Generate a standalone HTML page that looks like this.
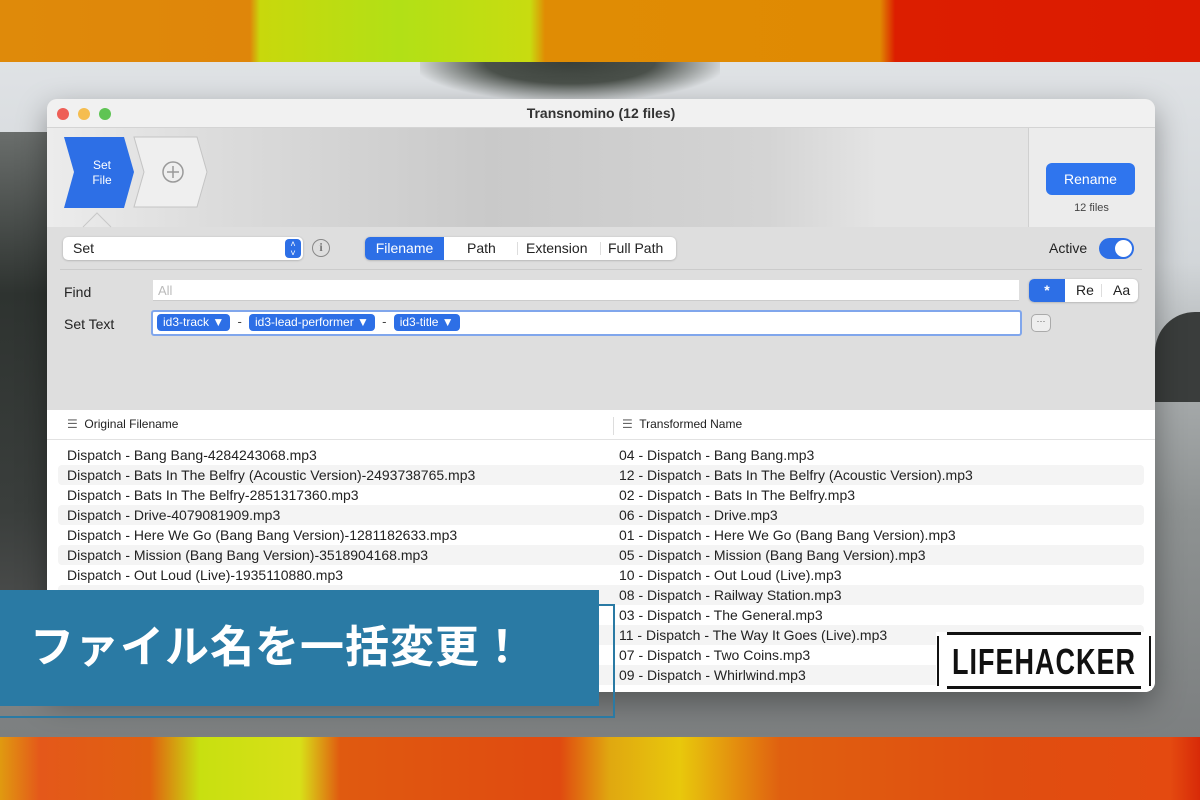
<!DOCTYPE html>
<html><head><meta charset="utf-8"><style>
*{margin:0;padding:0;box-sizing:border-box}
body{width:1200px;height:800px;overflow:hidden;position:relative;font-family:"Liberation Sans","Noto Sans CJK JP",sans-serif;background:#9a9ea1}
.abs{position:absolute}
#top{left:0;top:0;width:1200px;height:62px;background:linear-gradient(90deg,#df8a0a 0,#df860a 250px,#c8d80c 260px,#b2e016 400px,#c8dc10 530px,#e08c04 545px,#e08a02 880px,#dc1e00 895px,#dc1a00 1200px)}
#bot{left:0;top:737px;width:1200px;height:63px;background:linear-gradient(90deg,#e09a10 0,#e4581a 40px,#e06010 150px,#c8e010 200px,#d8e018 300px,#e05a10 340px,#e04a10 560px,#e0a810 610px,#e8c80c 680px,#e06010 780px,#e04e10 1000px,#e44a10 1170px,#d82a08 1200px)}
#photo{left:0;top:62px;width:1200px;height:675px;background:linear-gradient(180deg,#dfe2e5 0,#d2d6d9 200px,#a6aaab 330px,#8e9292 450px,#7c7f80 675px)}
.win{left:47px;top:99px;width:1108px;height:593px;background:#dedede;border-radius:10px;overflow:hidden;box-shadow:0 10px 30px rgba(0,0,0,.35)}
.title{left:0;top:0;width:1108px;height:29px;background:#f1f1f1;border-bottom:1px solid #d4d4d4;text-align:center;font-weight:bold;font-size:14px;line-height:29px;color:#333}
.dot{top:9px;width:12px;height:12px;border-radius:50%}
.tb{left:0;top:29px;width:1108px;height:99px;background:linear-gradient(90deg,#ececec 0,#dcdcdc 15%,#c9c9c9 40%,#d4d4d4 65%,#e4e4e4 75%)}
.rsec{left:981px;top:29px;width:127px;height:99px;background:#ececec;border-left:1px solid #d0d0d0}
.btn{background:#fff;border-radius:5px;box-shadow:0 0.5px 2px rgba(0,0,0,.25);font-size:14px;color:#222}
.lab{font-size:14px;color:#222}
.row{left:11px;width:1086px;height:20px;font-size:14px;color:#222;line-height:20px}
.row span{position:absolute;top:0}
.tok{display:inline-block;background:#2d6fe6;color:#fff;font-size:12px;border-radius:4px;padding:0 6px;height:17px;line-height:17px;margin-top:2px}
</style></head><body>
<div id="top" class="abs"></div>
<div id="photo" class="abs">
 <div class="abs" style="left:420px;top:0;width:300px;height:38px;background:radial-gradient(ellipse at 50% 0,#3a403a 0,#4a504a 40%,rgba(60,66,60,0) 75%)"></div>
 <div class="abs" style="left:0;top:70px;width:50px;height:540px;background:linear-gradient(180deg,#6a6e6c,#2e3330 30%,#3a3e3c 70%,#555 100%)"></div>
 <div class="abs" style="left:1155px;top:250px;width:45px;height:90px;background:#3a3d3c;border-radius:40px 0 0 0"></div>
</div>
<div id="bot" class="abs"></div>

<div class="win abs">
 <div class="title abs">Transnomino (12 files)</div>
 <div class="dot abs" style="left:10px;background:#ee5f57"></div>
 <div class="dot abs" style="left:31px;background:#f5bd4f"></div>
 <div class="dot abs" style="left:52px;background:#5fc454"></div>
 <div class="tb abs"></div>
 <svg class="abs" style="left:14px;top:37px" width="150" height="95">
  <polygon points="86,1 149,1 159,36 149,71 86,71 96,36" transform="translate(-13,0)" fill="#efefef" stroke="#c4c4c4"/>
  <circle cx="112" cy="36" r="10" fill="none" stroke="#9a9a9a" stroke-width="1.5"/>
  <path d="M112 30v12M106 36h12" stroke="#9a9a9a" stroke-width="1.5"/>
  <polygon points="3,1 63,1 73,36 63,72 3,72 13,36" fill="#2d6fe6"/>
  <polyline points="22,91 36,77 50,91" fill="none" stroke="#c8c8c8"/>
  <text x="41" y="33" fill="#fff" font-size="12" text-anchor="middle" font-family="Liberation Sans">Set</text>
  <text x="41" y="48" fill="#fff" font-size="12" text-anchor="middle" font-family="Liberation Sans">File</text>
 </svg>
 <div class="rsec abs"></div>
 <div class="abs" style="left:999px;top:64px;width:89px;height:32px;background:#2f75ee;border-radius:6px;color:#fff;font-size:14px;text-align:center;line-height:32px">Rename</div>
 <div class="abs" style="left:981px;top:103px;width:127px;text-align:center;font-size:11px;color:#444">12 files</div>

 <div class="btn abs" style="left:16px;top:138px;width:240px;height:23px;line-height:23px;padding-left:10px">Set</div>
 <div class="abs" style="left:238px;top:140px;width:16px;height:19px;background:#2d6fe6;border-radius:4px;color:#fff;font-size:9px;text-align:center;line-height:9px;padding-top:1px">˄<br>˅</div>
 <div class="abs" style="left:265px;top:140px;width:18px;height:18px;border:1.5px solid #888;border-radius:50%;text-align:center;font:bold 12px/15px 'Liberation Serif',serif;color:#777">i</div>
 <div class="btn abs" style="left:318px;top:138px;width:311px;height:23px;line-height:23px">
  <div class="abs" style="left:0;top:0;width:79px;height:23px;background:#2d6fe6;color:#fff;border-radius:5px 0 0 5px;text-align:center">Filename</div>
  <span class="abs" style="left:102px">Path</span>
  <span class="abs" style="left:152px;top:5px;height:13px;border-left:1px solid #ddd"></span>
  <span class="abs" style="left:161px">Extension</span>
  <span class="abs" style="left:235px;top:5px;height:13px;border-left:1px solid #ddd"></span>
  <span class="abs" style="left:243px">Full Path</span>
 </div>
 <div class="abs lab" style="left:1002px;top:141px">Active</div>
 <div class="abs" style="left:1052px;top:139px;width:35px;height:21px;background:#2d6fe6;border-radius:11px"><div class="abs" style="right:2px;top:2px;width:17px;height:17px;background:#fff;border-radius:50%"></div></div>
 <div class="abs" style="left:13px;top:170px;width:1082px;border-top:1px solid #cbcbcb"></div>

 <div class="abs lab" style="left:17px;top:185px">Find</div>
 <div class="abs" style="left:106px;top:181px;width:866px;height:21px;background:#fff;border-bottom:1px solid #ccc;font-size:13px;color:#bbb;line-height:21px;padding-left:5px">All</div>
 <div class="btn abs" style="left:982px;top:180px;width:109px;height:23px;line-height:23px">
  <div class="abs" style="left:0;top:0;width:36px;height:23px;background:#2d6fe6;color:#fff;border-radius:5px 0 0 5px;text-align:center;font-weight:bold">*</div>
  <span class="abs" style="left:47px">Re</span>
  <span class="abs" style="left:72px;top:5px;height:13px;border-left:1px solid #ddd"></span>
  <span class="abs" style="left:84px">Aa</span>
 </div>
 <div class="abs lab" style="left:17px;top:217px">Set Text</div>
 <div class="abs" style="left:104px;top:211px;width:871px;height:26px;background:#fff;border:2.5px solid #80a6ec;border-radius:3px;padding-left:4px;font-size:13px;color:#444;white-space:nowrap">
  <span class="tok">id3-track ▼</span> &nbsp;- &nbsp;<span class="tok">id3-lead-performer ▼</span> &nbsp;- &nbsp;<span class="tok">id3-title ▼</span>
 </div>
 <div class="abs" style="left:984px;top:215px;width:20px;height:18px;border:1.5px solid #aaa;border-radius:5px;background:#eee;font-size:9px;text-align:center;line-height:12px;color:#555">···</div>

 <div class="abs" style="left:0;top:311px;width:1108px;height:282px;background:#fff"></div>
 <div class="abs" style="left:0;top:340px;width:1108px;border-top:1px solid #e2e2e2"></div>
 <div class="abs" style="left:566px;top:318px;height:18px;border-left:1px solid #ddd"></div>
 <div class="abs" style="left:20px;top:318px;font-size:12px;color:#222"><span style="color:#666">☰</span>&nbsp; Original Filename</div>
 <div class="abs" style="left:575px;top:318px;font-size:12px;color:#222"><span style="color:#666">☰</span>&nbsp; Transformed Name</div>

 <div class="abs" style="left:0;top:346px;width:1108px">
 <div class="row abs" style="top:0"><span style="left:9px">Dispatch - Bang Bang-4284243068.mp3</span><span style="left:561px">04 - Dispatch - Bang Bang.mp3</span></div>
 <div class="row abs" style="top:20px;background:#f4f4f4;border-radius:4px"><span style="left:9px">Dispatch - Bats In The Belfry (Acoustic Version)-2493738765.mp3</span><span style="left:561px">12 - Dispatch - Bats In The Belfry (Acoustic Version).mp3</span></div>
 <div class="row abs" style="top:40px"><span style="left:9px">Dispatch - Bats In The Belfry-2851317360.mp3</span><span style="left:561px">02 - Dispatch - Bats In The Belfry.mp3</span></div>
 <div class="row abs" style="top:60px;background:#f4f4f4;border-radius:4px"><span style="left:9px">Dispatch - Drive-4079081909.mp3</span><span style="left:561px">06 - Dispatch - Drive.mp3</span></div>
 <div class="row abs" style="top:80px"><span style="left:9px">Dispatch - Here We Go (Bang Bang Version)-1281182633.mp3</span><span style="left:561px">01 - Dispatch - Here We Go (Bang Bang Version).mp3</span></div>
 <div class="row abs" style="top:100px;background:#f4f4f4;border-radius:4px"><span style="left:9px">Dispatch - Mission (Bang Bang Version)-3518904168.mp3</span><span style="left:561px">05 - Dispatch - Mission (Bang Bang Version).mp3</span></div>
 <div class="row abs" style="top:120px"><span style="left:9px">Dispatch - Out Loud (Live)-1935110880.mp3</span><span style="left:561px">10 - Dispatch - Out Loud (Live).mp3</span></div>
 <div class="row abs" style="top:140px;background:#f4f4f4;border-radius:4px"><span style="left:561px">08 - Dispatch - Railway Station.mp3</span></div>
 <div class="row abs" style="top:160px"><span style="left:561px">03 - Dispatch - The General.mp3</span></div>
 <div class="row abs" style="top:180px;background:#f4f4f4;border-radius:4px"><span style="left:561px">11 - Dispatch - The Way It Goes (Live).mp3</span></div>
 <div class="row abs" style="top:200px"><span style="left:561px">07 - Dispatch - Two Coins.mp3</span></div>
 <div class="row abs" style="top:220px;background:#f4f4f4;border-radius:4px"><span style="left:561px">09 - Dispatch - Whirlwind.mp3</span></div>
 </div>
</div>

<div class="abs" style="left:0;top:604px;width:615px;height:114px;border:2px solid #2a7aa4;border-left:none"></div>
<div class="abs" style="left:0;top:590px;width:599px;height:116px;background:#2a7aa4;color:#fff;font-size:44px;font-weight:bold;line-height:116px;padding-left:30px;letter-spacing:1px;font-family:'Liberation Sans','Noto Sans CJK JP',sans-serif">ファイル名を一括変更！</div>

<div class="abs" style="left:936px;top:632px;width:216px;height:58px;background:#fff"></div>
<div class="abs" style="left:947px;top:632px;width:194px;border-top:3px solid #111"></div>
<div class="abs" style="left:947px;top:686px;width:194px;border-top:3px solid #111"></div>
<div class="abs" style="left:937px;top:636px;height:50px;border-left:2px solid #111"></div>
<div class="abs" style="left:1149px;top:636px;height:50px;border-left:2px solid #111"></div>
<div class="abs" style="left:944px;top:647px;width:200px;text-align:center;font:bold 27px/30px 'Liberation Sans',sans-serif;letter-spacing:1px;color:#111;transform:scaleY(1.35)">LIFEHACKER</div>
</body></html>
